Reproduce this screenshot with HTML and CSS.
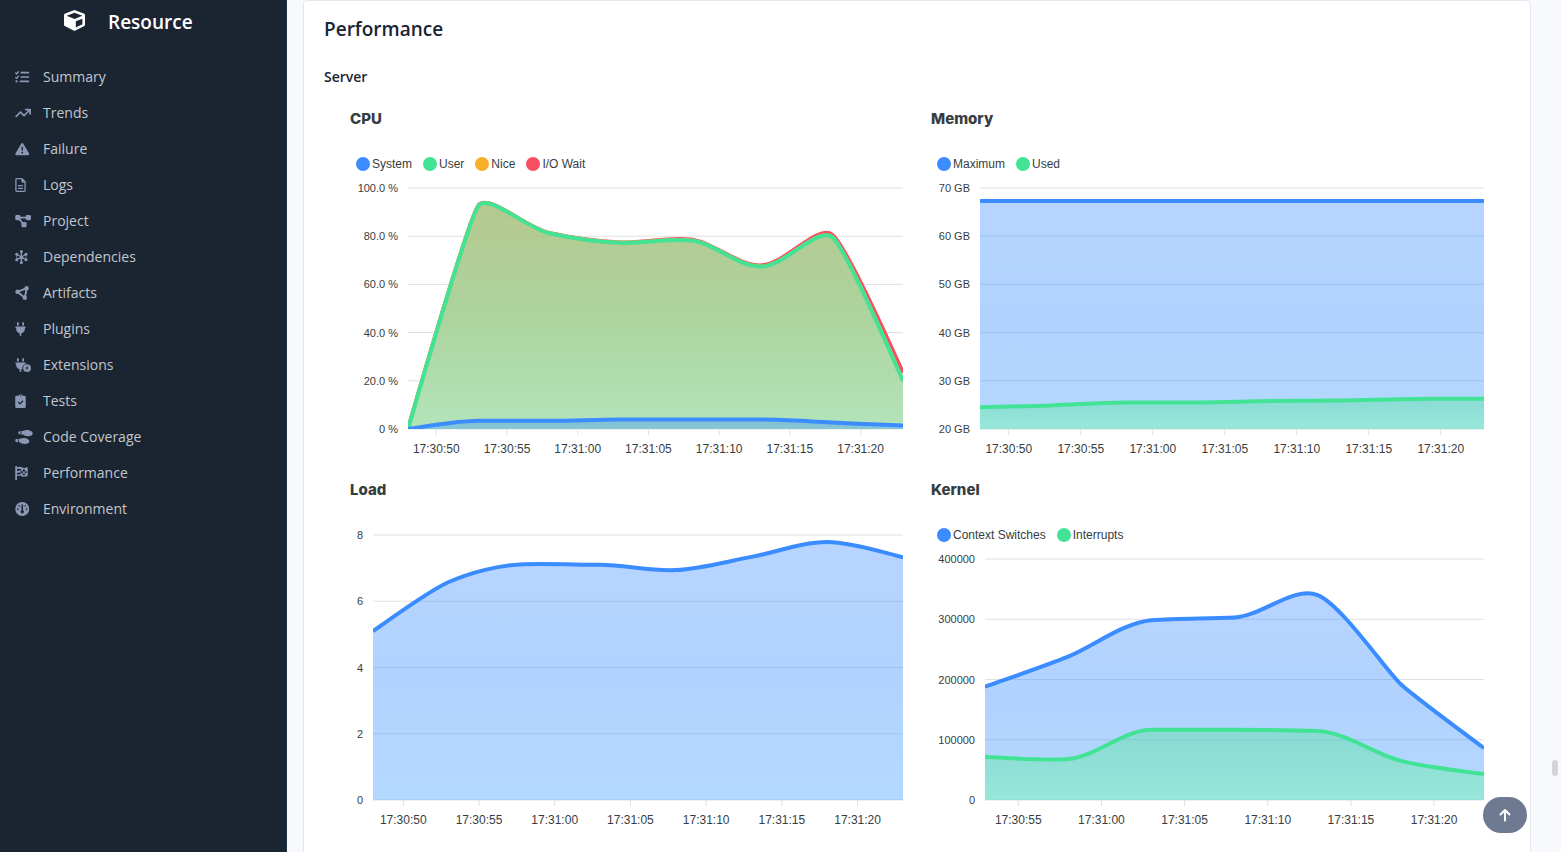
FILE: index.html
```html
<!DOCTYPE html>
<html lang="en">
<head>
<meta charset="utf-8">
<title>Resource - Performance</title>
<link rel="stylesheet" href="styles.css">
</head>
<body>
<div class="app">
  <aside class="sidebar">
    <a class="brand" href="#">
      <svg class="brand-logo" viewBox="0 0 512 512" aria-hidden="true"><path d="M239.1 6.3l-208 78c-18.7 7-31.1 25-31.1 45v225.1c0 18.2 10.3 34.8 26.5 42.9l208 104c13.5 6.8 29.4 6.8 42.9 0l208-104c16.3-8.1 26.5-24.8 26.5-42.9V129.3c0-20-12.4-37.9-31.1-44.9l-208-78C262 2.2 250 2.2 239.1 6.3zM256 68.4l192 72v1.1l-192 78-192-78v-1.1l192-72zm32 356V275.5l160-65v133.9l-160 80z"/></svg>
      <span class="brand-name">Resource</span>
    </a>
    <nav class="nav">
      <a class="nav-link" href="#summary"><svg class="icon" viewBox="0 0 640 512" aria-hidden="true"><path class="line" stroke-width="50" d="M20 112l32 32 64-80M20 272l32 32 64-80"/><circle cx="48" cy="416" r="42"/><path class="line" stroke-width="62" d="M222 96h258M222 256h258M190 416h290"/></svg>Summary</a>
      <a class="nav-link" href="#trends"><svg class="icon" viewBox="0 0 640 512" aria-hidden="true"><path d="M384 160c-17.700 0-32-14.300-32-32s14.300-32 32-32H544c17.700 0 32 14.300 32 32V288c0 17.700-14.300 32-32 32s-32-14.300-32-32V205.300L342.600 374.600c-12.500 12.500-32.800 12.500-45.300 0L192 269.300 54.600 406.600c-12.500 12.500-32.800 12.500-45.300 0s-12.500-32.800 0-45.300l160-160c12.500-12.500 32.800-12.500 45.300 0L320 306.700 466.700 160H384z"/></svg>Trends</a>
      <a class="nav-link" href="#failure"><svg class="icon" viewBox="0 0 640 512" aria-hidden="true"><path d="M256 32c14.200 0 27.300 7.500 34.500 19.800l216 368c7.300 12.400 7.300 27.700 .2 40.100S486.300 480 472 480H40c-14.300 0-27.600-7.700-34.700-20.100s-7-27.800 .2-40.100l216-368C228.700 39.500 241.800 32 256 32zm0 128c-13.300 0-24 10.700-24 24V296c0 13.300 10.700 24 24 24s24-10.700 24-24V184c0-13.300-10.700-24-24-24zm32 224a32 32 0 1 0 -64 0 32 32 0 1 0 64 0z"/></svg>Failure</a>
      <a class="nav-link" href="#logs"><svg class="icon" viewBox="0 0 640 512" aria-hidden="true"><path d="M64 464c-8.800 0-16-7.200-16-16V64c0-8.800 7.200-16 16-16H224v80c0 17.700 14.300 32 32 32h80V448c0 8.800-7.200 16-16 16H64zM64 0C28.700 0 0 28.700 0 64V448c0 35.300 28.700 64 64 64H320c35.300 0 64-28.700 64-64V154.500c0-17-6.700-33.300-18.700-45.300L274.700 18.700C262.700 6.700 246.500 0 229.500 0H64zm56 256c-13.300 0-24 10.700-24 24s10.700 24 24 24H264c13.300 0 24-10.700 24-24s-10.700-24-24-24H120zm0 96c-13.300 0-24 10.700-24 24s10.700 24 24 24H264c13.300 0 24-10.700 24-24s-10.700-24-24-24H120z"/></svg>Logs</a>
      <a class="nav-link" href="#project"><svg class="icon" viewBox="0 0 640 512" aria-hidden="true"><path d="M0 80C0 53.500 21.500 32 48 32h96c26.500 0 48 21.500 48 48V96H384V80c0-26.500 21.500-48 48-48h96c26.500 0 48 21.500 48 48v96c0 26.500-21.500 48-48 48H432c-26.500 0-48-21.500-48-48V160H192v16c0 1.700-.1 3.400-.3 5L272 288h96c26.500 0 48 21.500 48 48v96c0 26.500-21.500 48-48 48H272c-26.500 0-48-21.500-48-48V336c0-1.700 .1-3.400 .3-5L144 224H48c-26.500 0-48-21.500-48-48V80z"/></svg>Project</a>
      <a class="nav-link" href="#dependencies"><svg class="icon" viewBox="0 0 640 512" aria-hidden="true"><path class="line" stroke-width="48" d="M224 48v416M50 156l348 200M398 156L50 356"/><path class="line" stroke-width="24" d="M50 156v200M398 156v200"/><circle cx="224" cy="56" r="56"/><circle cx="224" cy="456" r="56"/><circle cx="56" cy="156" r="56"/><circle cx="392" cy="156" r="56"/><circle cx="56" cy="356" r="56"/><circle cx="392" cy="356" r="56"/></svg>Dependencies</a>
      <a class="nav-link" href="#artifacts"><svg class="icon" viewBox="0 0 640 512" aria-hidden="true"><path class="line" stroke-width="72" d="M76 212L420 76 350 432z"/><circle cx="80" cy="212" r="80"/><circle cx="414" cy="82" r="80"/><circle cx="350" cy="430" r="80"/></svg>Artifacts</a>
      <a class="nav-link" href="#plugins"><svg class="icon" viewBox="0 0 640 512" aria-hidden="true"><path d="M96 0C78.300 0 64 14.300 64 32v96h64V32c0-17.700-14.300-32-32-32zM288 0c-17.700 0-32 14.300-32 32v96h64V32c0-17.700-14.300-32-32-32zM32 160c-17.700 0-32 14.300-32 32s14.300 32 32 32v32c0 77.400 55 142 128 156.800V480c0 17.700 14.300 32 32 32s32-14.300 32-32V412.800C297 398 352 333.400 352 256V224c17.700 0 32-14.300 32-32s-14.300-32-32-32H32z"/></svg>Plugins</a>
      <a class="nav-link" href="#extensions"><svg class="icon" viewBox="0 0 640 512" aria-hidden="true"><path d="M96 0C78.300 0 64 14.300 64 32v96h64V32c0-17.700-14.300-32-32-32zM288 0c-17.700 0-32 14.300-32 32v96h64V32c0-17.700-14.300-32-32-32zM32 160c-17.700 0-32 14.300-32 32s14.300 32 32 32v32c0 77.400 55 142 128 156.800V480c0 17.700 14.300 32 32 32s32-14.300 32-32V412.800c11-3 20-6 32-10.800-8-88 48-166 132-196 0-28-12-46-36-46H32z"/><path fill-rule="evenodd" d="M432 224a144 144 0 1 1 0 288 144 144 0 1 1 0-288zm26 62l-90 92h50l-18 72 92-94h-50z"/></svg>Extensions</a>
      <a class="nav-link" href="#tests"><svg class="icon" viewBox="0 0 640 512" aria-hidden="true"><path fill-rule="evenodd" d="M48 64h64a84 84 0 0 1 160 0h64a48 48 0 0 1 48 48v352a48 48 0 0 1-48 48H48a48 48 0 0 1-48-48V112a48 48 0 0 1 48-48zm144-24a26 26 0 1 0 0 52 26 26 0 1 0 0-52zM86 302l86 90 128-130-32-32-96 98-54-56z"/></svg>Tests</a>
      <a class="nav-link" href="#coverage"><svg class="icon" viewBox="0 0 640 512" aria-hidden="true"><path d="M416 0c-70 0-112 32-160 32h-32v128h32c64 0 96 64 208 64 112 0 176-40 176-96C640 50 530 0 416 0zM192 32h-16c-36 0-64 28-64 64s28 64 64 64h16zM304 288c-70 0-112 32-160 32h-16v128h16c52 0 92 64 208 64 104 0 164-36 164-100 0-74-96-124-212-124zM96 320H64c-36 0-64 28-64 64s28 64 64 64h32z"/></svg>Code Coverage</a>
      <a class="nav-link" href="#performance"><svg class="icon" viewBox="0 0 640 512" aria-hidden="true"><path fill-rule="evenodd" d="M0 0h62v48c70-28 120-28 180 0 66 30 120 28 174 0 20-8 40 0 40 24v280c-70 50-140 54-220 20-60-26-110-22-174-2v142H0zm62 114v70l72-16V98zm144-8l-72-8v70l72 8zM134 238l-72 16v64l72-14zm72-62v72l74 26v-76zm74-54v76l72 6v-74zm72 82v72l60-22v-68zm-72 70v68l72 4v-66zM134 304l72 8v-64l-72-10z"/></svg>Performance</a>
      <a class="nav-link" href="#environment"><svg class="icon" viewBox="0 0 640 512" aria-hidden="true"><path fill-rule="evenodd" d="M256 0a256 256 0 1 1 0 512 256 256 0 1 1 0-512zm-28 110v198a58 58 0 1 0 56 0V110a28 28 0 0 0-56 0zM144 116a30 30 0 1 0 0 60 30 30 0 1 0 0-60zM96 226a32 32 0 1 0 0 64 32 32 0 1 0 0-64zM368 116a30 30 0 1 0 0 60 30 30 0 1 0 0-60zM416 226a32 32 0 1 0 0 64 32 32 0 1 0 0-64z"/></svg>Environment</a>
    </nav>
  </aside>

  <main class="main">
    <section class="card">
      <h2 class="card-title">Performance</h2>
      <h3 class="card-subtitle">Server</h3>
      <div class="charts">
        <figure class="chart">
          <figcaption class="chart-title">CPU</figcaption>
          <ul class="legend">
            <li class="legend-item blue">System</li>
            <li class="legend-item green">User</li>
            <li class="legend-item orange">Nice</li>
            <li class="legend-item red">I/O Wait</li>
          </ul>
          <svg class="plot" id="cpu" role="img" aria-label="CPU usage"></svg>
        </figure>
        <figure class="chart">
          <figcaption class="chart-title">Memory</figcaption>
          <ul class="legend">
            <li class="legend-item blue">Maximum</li>
            <li class="legend-item green">Used</li>
          </ul>
          <svg class="plot" id="memory" role="img" aria-label="Memory usage"></svg>
        </figure>
        <figure class="chart">
          <figcaption class="chart-title">Load</figcaption>
          <svg class="plot plot-tall" id="load" role="img" aria-label="Load"></svg>
        </figure>
        <figure class="chart">
          <figcaption class="chart-title">Kernel</figcaption>
          <ul class="legend">
            <li class="legend-item blue">Context Switches</li>
            <li class="legend-item green">Interrupts</li>
          </ul>
          <svg class="plot" id="kernel" role="img" aria-label="Kernel activity"></svg>
        </figure>
      </div>
    </section>
    <div class="scroll-thumb"></div>
    <button class="to-top" type="button" aria-label="Back to top">
      <svg class="to-top-icon" viewBox="0 0 14 14" aria-hidden="true"><path d="M7 12.500V2M2.500 6.500L7 2l4.500 4.500"/></svg>
    </button>
  </main>
</div>
<script src="charts.js"></script>
</body>
</html>
```
FILE: styles.css
```css
* { box-sizing: border-box; }

body {
  margin: 0;
  background: #f7f9fc;
  color: #1a2434;
  font-family: "Open Sans", "Noto Sans", sans-serif;
}

.app {
  display: flex;
  height: 100vh;
  overflow: hidden;
}

.sidebar {
  flex: 0 0 287px;
  background: #1b2431;
  border-right: 1px solid #1d3246;
}

.brand {
  display: flex;
  align-items: center;
  gap: 23px;
  height: 44px;
  padding-left: 64px;
  color: #fff;
  text-decoration: none;
}

.brand-logo {
  width: 21px;
  height: 21px;
  margin-bottom: 3px;
  fill: #fff;
}

.brand-name {
  font-size: 19px;
  font-weight: 600;
  line-height: 28px;
}

.nav {
  display: flex;
  flex-direction: column;
  padding: 14px 15px 0;
}

.nav-link {
  display: flex;
  align-items: center;
  gap: 10px;
  height: 36px;
  color: #c1c6cf;
  font-size: 14px;
  text-decoration: none;
}

.icon {
  width: 18px;
  height: 14px;
  margin-top: 2px;
  fill: #8b98b4;
}

.icon .line {
  fill: none;
  stroke: #8b98b4;
  stroke-linecap: round;
  stroke-linejoin: round;
}

.main {
  flex: 1;
  min-width: 0;
  padding: 0 30px 0 16px;
}

.card {
  padding: 12px 20px 40px;
  background: #fff;
  border: 1px solid #e4e7ed;
  border-radius: 4px;
}

.card-title {
  margin: 0;
  font-size: 19px;
  font-weight: 600;
  line-height: 32px;
}

.card-subtitle {
  margin: 20px 0 0;
  font-size: 14px;
  font-weight: 600;
  line-height: 24px;
}

.charts {
  display: grid;
  grid-template-columns: repeat(2, minmax(0, 1fr));
  gap: 8px;
  padding: 21px 16px 0;
}

.chart {
  margin: 0;
  font-family: "Liberation Sans", Arial, sans-serif;
}

.chart-title {
  padding-left: 10px;
  color: #373d3f;
  font-family: Inter, "Liberation Sans", sans-serif;
  font-size: 15px;
  font-weight: 800;
  line-height: 18px;
}

.legend {
  display: flex;
  gap: 11px;
  margin: 26px 0 0;
  padding: 0 0 0 16px;
  color: #373d3f;
  font-size: 12px;
  line-height: 20px;
  list-style: none;
}

.legend-item {
  display: flex;
  align-items: center;
  gap: 2px;
}

.legend-item::before {
  content: "";
  width: 14px;
  height: 14px;
  border-radius: 50%;
  background: currentColor;
}

.blue::before { background: #3b8cff; }
.green::before { background: #43e396; }
.orange::before { background: #f8b02c; }
.red::before { background: #f74f62; }

.plot {
  display: block;
  width: 100%;
  height: 299px;
}

.plot-tall {
  height: 323px;
  margin-top: 22px;
}

.plot text { fill: #373d3f; }
.plot .y-label { font-size: 11px; text-anchor: end; }
.plot .x-label { font-size: 12px; text-anchor: middle; }
.plot .grid { stroke: #e0e0e0; stroke-width: 1; }
.plot .series { fill: none; stroke-width: 4; }

.scroll-thumb {
  position: absolute;
  right: 3px;
  bottom: 76px;
  width: 6px;
  height: 16px;
  border-radius: 3px;
  background: #d3d5d9;
}

.to-top {
  position: absolute;
  right: 34px;
  bottom: 19px;
  display: flex;
  align-items: center;
  justify-content: center;
  width: 44px;
  height: 36px;
  padding: 0;
  border: 0;
  border-radius: 18px;
  background: #6e7a91;
}

.to-top-icon {
  width: 14px;
  height: 14px;
  fill: none;
  stroke: #fff;
  stroke-width: 2;
  stroke-linecap: round;
  stroke-linejoin: round;
}
```
FILE: charts.js
```js
const BLUE = '#3b8cff';
const GREEN = '#43e396';
const ORANGE = '#f8b02c';
const RED = '#f74f62';

const FILLS = {
  blue: ['rgba(59,140,255,.37)', 'rgba(60,142,255,.4)', 'rgba(67,160,255,.4)'],
  green: ['rgba(66,226,140,.37)', 'rgba(85,240,147,.37)', 'rgba(104,255,154,.37)'],
  cpu: ['rgba(168,191,123,.85)', 'rgba(158,204,141,.85)', 'rgba(166,223,174,.85)']
};

const TOP = 14;
const BOTTOM = 44;
const TIMES = ['17:30:50', '17:30:55', '17:31:00', '17:31:05', '17:31:10', '17:31:15', '17:31:20'];

const userLoad = [0, 92.8, 81.2, 77.3, 78.2, 67.4, 79.6, 20];

const charts = [
  {
    id: 'cpu', left: 68, min: 0, max: 100, times: TIMES,
    labels: ['0 %', '20.0 %', '40.0 %', '60.0 %', '80.0 %', '100.0 %'],
    series: [
      { color: RED, values: [0, 92.9, 81.3, 77.4, 78.6, 67.9, 80.6, 23.3] },
      { color: ORANGE, values: userLoad },
      { color: GREEN, values: userLoad, fill: 'cpu' },
      { color: BLUE, values: [0, 3.4, 3.4, 3.9, 3.9, 3.9, 2.7, 1.4], fill: 'blue' }
    ]
  },
  {
    id: 'memory', left: 59, min: 20, max: 70, times: TIMES,
    labels: ['20 GB', '30 GB', '40 GB', '50 GB', '60 GB', '70 GB'],
    series: [
      { color: BLUE, values: [67.3, 67.3, 67.3, 67.3, 67.3, 67.3, 67.3, 67.3], fill: 'blue' },
      { color: GREEN, values: [24.5, 24.9, 25.5, 25.5, 25.8, 25.9, 26.2, 26.3], fill: 'green' }
    ]
  },
  {
    id: 'load', left: 33, min: 0, max: 8, times: TIMES,
    labels: ['0', '2', '4', '6', '8'],
    series: [
      { color: BLUE, values: [5.1, 6.58, 7.12, 7.1, 6.94, 7.34, 7.79, 7.33], fill: 'blue' }
    ]
  },
  {
    id: 'kernel', left: 64, min: 0, max: 400000, times: TIMES.slice(1),
    labels: ['0', '100000', '200000', '300000', '400000'],
    series: [
      { color: BLUE, values: [188000, 238000, 298500, 303000, 340000, 192000, 86000], fill: 'blue' },
      { color: GREEN, values: [71500, 68000, 116500, 116500, 114500, 65000, 43000], fill: 'green' }
    ]
  }
];

// Cubic spline through the points, with tangents limited between neighbours.
function smoothPath(points) {
  const last = points.length - 1;
  const slope = i => (points[i + 1][1] - points[i][1]) / (points[i + 1][0] - points[i][0]);
  const m = points.map((p, i) =>
    i === 0 ? slope(0) : i === last ? slope(last - 1) : (slope(i - 1) + slope(i)) / 2);
  for (let i = 0; i < last; i++) {
    const d = slope(i);
    if (Math.abs(d) < 1e-6) {
      m[i] = m[i + 1] = 0;
      continue;
    }
    const a = m[i] / d;
    const b = m[i + 1] / d;
    const s = a * a + b * b;
    if (s > 9) {
      const k = d * 3 / Math.sqrt(s);
      m[i] = k * a;
      m[i + 1] = k * b;
    }
  }
  const t = points.map((p, i) => {
    const span = points[Math.min(last, i + 1)][0] - points[Math.max(0, i - 1)][0];
    const s = span / (6 * (1 + m[i] * m[i]));
    return [s, m[i] * s];
  });
  let d = `M${points[0]}`;
  for (let i = 1; i <= last; i++) {
    const [px, py] = points[i - 1];
    const [x, y] = points[i];
    d += `C${px + t[i - 1][0]},${py + t[i - 1][1]} ${x - t[i][0]},${y - t[i][1]} ${x},${y}`;
  }
  return d;
}

function draw(chart) {
  const svg = document.getElementById(chart.id);
  const { width, height } = svg.getBoundingClientRect();
  const left = chart.left;
  const right = width - 10;
  const base = height - BOTTOM;
  const w = right - left;
  const h = base - TOP;
  const y = v => base - (v - chart.min) / (chart.max - chart.min) * h;

  let out = `<defs><clipPath id="${chart.id}-clip"><rect x="${left}" y="${TOP - 2}" width="${w}" height="${h + 2}"/></clipPath>`;
  for (const [name, stops] of Object.entries(FILLS)) {
    out += `<linearGradient id="${chart.id}-${name}" x1="0" y1="0" x2="0" y2="1">` +
      stops.map((c, i) => `<stop offset="${i / 2}" stop-color="${c}"/>`).join('') + '</linearGradient>';
  }
  out += '</defs>';

  chart.labels.forEach((label, i) => {
    const ly = base - i * h / (chart.labels.length - 1);
    out += `<line class="grid" x1="${left}" x2="${right}" y1="${ly}" y2="${ly}"/>`;
    out += `<text class="y-label" x="${left - 10}" y="${Math.round(ly) + 4}">${label}</text>`;
  });

  const steps = chart.series[0].values.length - 1;
  chart.times.forEach((time, i) => {
    const x = left + (i + 0.4) * w / steps;
    out += `<line class="grid" x1="${x}" x2="${x}" y1="${base}" y2="${base + 6}"/>`;
    out += `<text class="x-label" x="${x}" y="${base + 24}">${time}</text>`;
  });

  out += `<g clip-path="url(#${chart.id}-clip)">`;
  for (const s of chart.series) {
    const line = smoothPath(s.values.map((v, i) => [left + i * w / steps, y(v)]));
    if (s.fill) {
      out += `<path fill="url(#${chart.id}-${s.fill})" d="${line}L${right},${base}L${left},${base}Z"/>`;
    }
    out += `<path class="series" stroke="${s.color}" d="${line}"/>`;
  }
  svg.innerHTML = out + '</g>';
}

const drawAll = () => charts.forEach(draw);
window.addEventListener('resize', drawAll);
drawAll();
```
